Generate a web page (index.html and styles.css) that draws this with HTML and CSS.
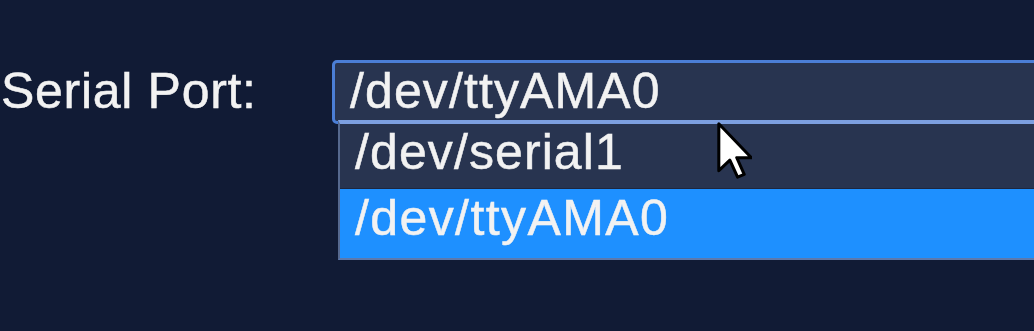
FILE: index.html
```html
<!DOCTYPE html>
<html>
<head>
<meta charset="utf-8">
<link rel="stylesheet" href="styles.css">
</head>
<body>
<div class="row">
  <label class="label">Serial Port:</label>
  <div class="select-wrap">
    <div class="select">/dev/ttyAMA0</div>
    <ul class="menu">
      <li class="opt">/dev/serial1</li>
      <li class="opt selected">/dev/ttyAMA0</li>
    </ul>
    <svg class="cursor" width="36" height="58" viewBox="-1 -1 13 21">
      <path d="M0,0 L0,17 L4,13.2 L6.8,19.3 L9.2,18.3 L6.5,12.3 L11.8,12.3 Z" fill="#fff" stroke="#000" stroke-width="1.1" stroke-linejoin="round"/>
    </svg>
  </div>
</div>
</body>
</html>
```

FILE: styles.css
```css
html, body {
  margin: 0;
  padding: 0;
  background: #111b35;
  overflow: hidden;
  width: 1034px;
  height: 331px;
}
.row {
  display: flex;
  align-items: flex-start;
  padding-top: 60px;
  font-family: "Liberation Sans", Arial, sans-serif;
  font-size: 50px;
  color: #f2f2f2;
  -webkit-text-stroke: 0.5px currentColor;
}
.label {
  flex: 0 0 332px;
  padding-left: 1px;
  box-sizing: border-box;
  line-height: 62px;
  letter-spacing: 0.7px;
}
.select-wrap {
  position: relative;
  flex: 0 0 760px;
}
.select {
  box-sizing: border-box;
  height: 64px;
  border: 3px solid #4b7ed6;
  border-radius: 5px;
  background: #283450;
  padding-left: 15px;
  line-height: 56px;
  letter-spacing: 1.1px;
}
.menu {
  position: absolute;
  top: 60px;
  left: 6px;
  width: 760px;
  margin: 0;
  padding: 0;
  list-style: none;
  background: #283450;
  border: 2px solid #56698f;
  border-top: 4px solid #7c9fe0;
  border-bottom-color: #5d79ad;
}
.opt {
  padding-left: 15px;
  letter-spacing: 1.1px;
}
.opt:first-child {
  height: 64px;
  line-height: 56px;
  border-bottom: 1px solid #1d2740;
}
.opt.selected {
  background: #1e90ff;
  height: 69px;
  line-height: 58px;
  letter-spacing: 1.4px;
}
.cursor {
  position: absolute;
  left: 384px;
  top: 61px;
}
```
